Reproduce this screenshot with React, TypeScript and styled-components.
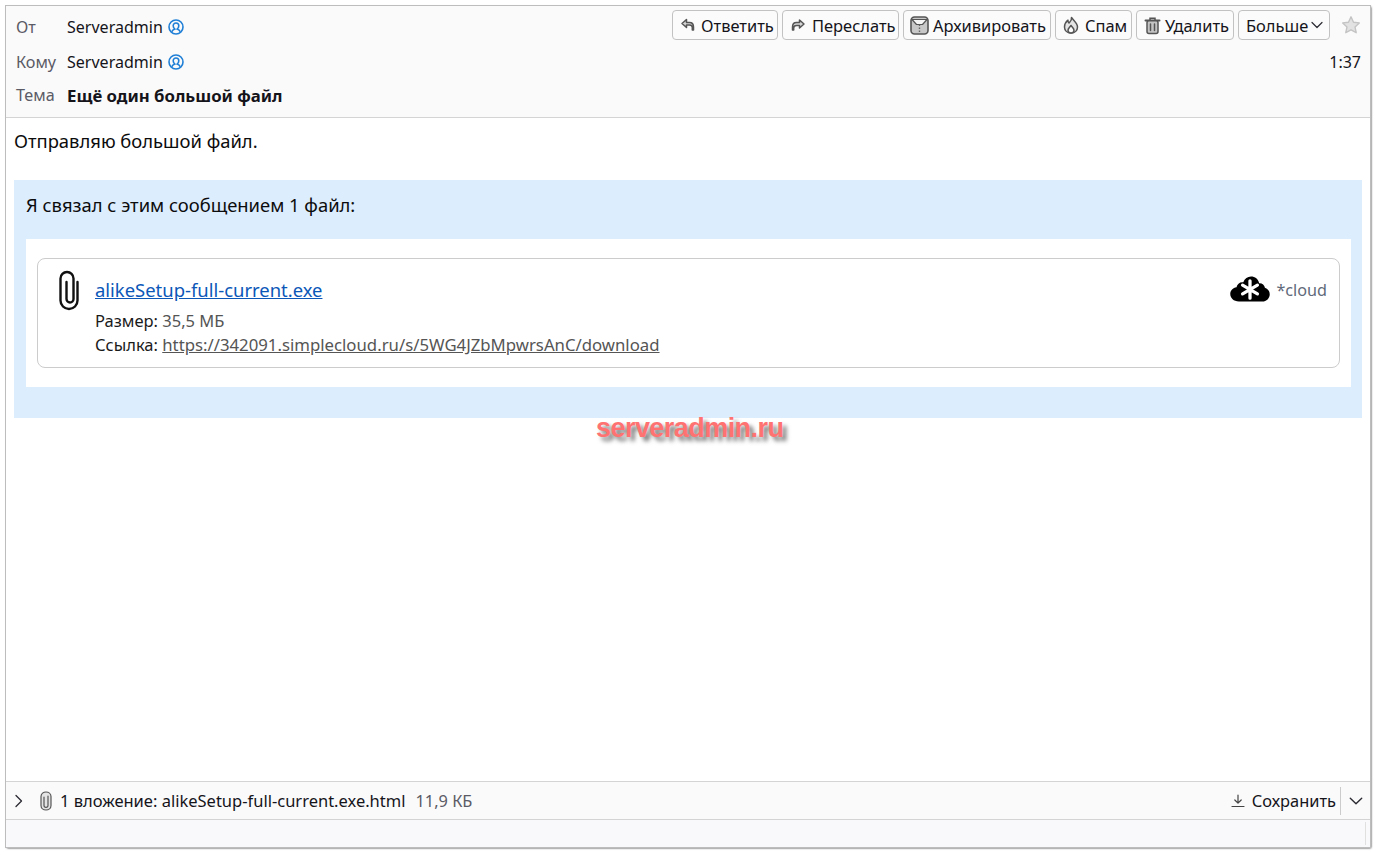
import React from "react";
import styled, { createGlobalStyle } from "styled-components";

const Global = createGlobalStyle`
  html, body { margin: 0; padding: 0; background: #fff; }
  body { font-family: "Noto Sans", "Open Sans", sans-serif; color: #15141a; }
  #root { height: 853px; overflow: hidden; }
`;
const Page = styled.div`
  height: 853px; box-sizing: border-box; padding: 6px 6px 5px 6px; background: #fff;
`;
const Win = styled.div`
  position: relative; height: 841px; display: flex; flex-direction: column; background: #fff;
  box-shadow: 0 0 0 1px #bdbdbd, 1px 1px 2px 0 rgba(0,0,0,.9);
`;
const Header = styled.header`
  height: 112px; flex: none; box-sizing: border-box; background: #fafafa; border-bottom: 1px solid #d4d4d4;
  padding: 4px 0 0 10px; display: flex; flex-direction: column;
`;
const Row = styled.div<{ $h: number }>`
  height: ${(p) => p.$h}px; display: flex; align-items: center; font-size: 16.05px;
`;
const Label = styled.span`
  width: 51px; flex: none; color: #5b5b66; font-size: 16.2px;
`;
const Name = styled.span``;
const Subject = styled.span`
  font-weight: 700; font-size: 16.75px;
`;
const Spacer = styled.div`flex: 1;`;
const Toolbar = styled.div`
  display: flex; align-items: center; align-self: flex-start; gap: 4px; padding-right: 9px;
`;
const Btn = styled.button<{ $w: number }>`
  width: ${(p) => p.$w}px; height: 30px; box-sizing: border-box; padding: 0 0 0 7px; margin: 0;
  display: flex; align-items: center; background: #fbfbfb; border: 1px solid #c2c2c2; border-radius: 4px;
  font: inherit; font-size: 16.45px; color: #15141a; white-space: nowrap;
  svg { flex: none; }
`;
const BtnText = styled.span<{ $ml: number }>`
  margin-left: ${(p) => p.$ml}px;
`;
const BtnCaret = styled.span`
  display: flex; margin-left: 2px;
`;
const StarBox = styled.span`
  display: flex; width: 20px; margin-left: 7px;
`;
const Time = styled.span`
  font-size: 16px; padding-right: 9px;
`;
const Body = styled.main`
  flex: 1; padding: 8px 8px 0 8px; font-size: 18.4px; color: #0c0c0d; position: relative;
`;
const Para = styled.p`
  margin: 0; height: 54px; line-height: 30px;
`;
const Blue = styled.section`
  height: 238px; box-sizing: border-box; background: #dcedfe; padding: 0 11px 0 12px;
`;
const BlueTitle = styled.div`
  height: 59px; line-height: 50px;
`;
const WhiteBox = styled.div`
  height: 148px; box-sizing: border-box; background: #fff; padding: 19px 11px 19px 11px;
`;
const Card = styled.div`
  height: 110px; box-sizing: border-box; border: 1px solid #ccc; border-radius: 8px; display: flex;
  padding: 11px 12px 0 20px;
`;
const ClipCol = styled.div`
  width: 37px; flex: none;
`;
const Info = styled.div`
  flex: 1; display: flex; flex-direction: column; margin-top: -2px;
`;
const FileLink = styled.a`
  color: #0b57b8; text-decoration: underline; font-size: 18.45px; line-height: 24px; height: 37px; padding-top: 10px; box-sizing: border-box;
`;
const Meta = styled.div`
  font-size: 16.5px; line-height: 24px; color: #1a1a1a; margin-top: 4px;
  & + & { margin-top: 0; }
`;
const MetaVal = styled.span`color: #555;`;
const MetaLink = styled.a`color: #555; text-decoration: underline; font-size: 16.75px;`;
const Provider = styled.div`
  display: flex; align-items: center; height: 40px; font-size: 16.2px; color: #5f6a7a; gap: 6px;
`;
const CloudMark = styled.span`
  display: flex; margin-top: -2px; margin-right: 0; margin-left: 1px;
`;
const Watermark = styled.div`
  position: absolute; left: 590px; top: 295px; font-family: "Liberation Sans", sans-serif; font-weight: 700; font-size: 27px;
  line-height: 30px; color: #ff7272; letter-spacing: -0.55px; text-shadow: 4px 4px 4px rgba(70,70,70,.75);
`;
const AttachBar = styled.div`
  height: 39px; flex: none; box-sizing: border-box; background: #fafafa; border-top: 1px solid #d4d4d4; border-bottom: 1px solid #d4d4d4;
  display: flex; align-items: center; padding-left: 6px; font-size: 16.5px;
`;
const Twisty = styled.span`display: flex; width: 24px;`;
const ClipSm = styled.span`display: flex; width: 14px; margin-left: 3px; margin-right: 7px;`;
const Size = styled.span`color: #5b5b66; margin-left: 10px; font-size: 16.35px;`;
const AttachName = styled.span``;
const Save = styled.div`
  display: flex; align-items: center; gap: 7px; padding-right: 4px; font-size: 16.4px;
`;
const SaveMenu = styled.div`
  display: flex; align-items: center; justify-content: center; width: 29px; height: 28px; border-left: 1px solid #ccc;
`;
const Status = styled.footer`
  height: 27px; flex: none; background: #f9f9fb; display: flex; justify-content: flex-end;
`;
const Grip = styled.div`
  width: 4px; border-left: 1px solid #e0e0e0; margin: 2px 0;
`;

const ic = { fill: "#d4d4d4", stroke: "#555", strokeWidth: 1.5, strokeLinecap: "round" as const, strokeLinejoin: "round" as const };

const Contact = () => (
  <svg width="16" height="16" viewBox="0 0 16 16" style={{ marginLeft: 5 }} fill="none" stroke="#1f7fd6" strokeWidth="1.6">
    <circle cx="8" cy="8" r="7" />
    <path d="M3.800 12.800c.3-1.600 1.200-2.100 3-2.800-1-.8-1.600-1.800-1.600-3.200C5.200 5 6.400 4 8 4s2.800 1 2.800 2.800c0 1.400-.6 2.400-1.600 3.200 1.800.7 2.700 1.200 3 2.800" />
  </svg>
);
const Reply = () => (
  <svg width="16" height="16" viewBox="0 0 16 16" {...ic}><path d="M6.500 2.500 2 6.500l4.500 4V8h3c1.800 0 2.800 1 2.800 2.600V13h1.200v-3c0-3-1.800-4.500-4-4.500H6.500z" /></svg>
);
const Forward = () => (
  <svg width="16" height="16" viewBox="0 0 16 16" {...ic}><path d="M9.500 3 14 7l-4.500 4V8.500h-3C4.700 8.500 3.700 9.500 3.700 11v2H2.500v-3c0-3 1.800-4.500 4-4.500h3z" /></svg>
);
const Archive = () => (
  <svg width="19" height="19" viewBox="0 0 19 19" style={{ marginLeft: -1 }}>
    <rect x="1" y="1" width="17" height="17" rx="3.500" fill="#c8c8c8" stroke="#555" strokeWidth="1.600" />
    <path d="M2 3.500h15L12.500 8.500h-6z" fill="#f6f6f6" stroke="#555" strokeWidth="1.200" strokeLinejoin="round" />
    <path d="M9.500 8.500v9" stroke="#666" strokeWidth="1.400" strokeDasharray="1.500 1.500" />
  </svg>
);
const Flame = () => (
  <svg width="16" height="19" viewBox="0 0 16 19" {...ic} fill="#e4e4e4">
    <path d="M8.500 1.500c.5 3-1 4-2.500 5.500C5 5.800 4.800 5 5 4.200 2.800 6 1.500 8.300 1.500 11c0 3.500 2.500 6 6.500 6s6.500-2.500 6.500-6c0-4-3.500-6-6-9.500z" />
    <path d="M8 17c-1.800 0-3-1.200-3-2.800 0-1.700 1.700-2.700 3-4.700 1.300 2 3 3 3 4.700 0 1.600-1.200 2.800-3 2.800z" fill="#fbfbfb" />
  </svg>
);
const Trash = () => (
  <svg width="17" height="19" viewBox="0 0 17 19" fill="none" stroke="#555" strokeWidth="1.500" strokeLinecap="round">
    <path d="M1.500 4.500h14" strokeWidth="2" />
    <path d="M6 4V2.200h5V4" />
    <rect x="3" y="4.800" width="11" height="12.700" rx="2" fill="#c4c4c4" />
    <path d="M6.500 8v6.500M10.500 8v6.500" />
  </svg>
);
const Chevron = ({ size = 14 }: { size?: number }) => (
  <svg width={size} height={size} viewBox="0 0 14 14" fill="none" stroke="#2b2a33" strokeWidth="1.200" strokeLinecap="round" strokeLinejoin="round"><path d="m2 4.500 5 5 5-5" /></svg>
);
const ChevronRight = () => (
  <svg width="14" height="14" viewBox="0 0 14 14" fill="none" stroke="#2b2a33" strokeWidth="1.300" strokeLinecap="round" strokeLinejoin="round"><path d="m4 1.500 5.500 5.500L4 12.500" /></svg>
);
const Star = () => (
  <svg width="20" height="20" viewBox="0 0 20 20"><path d="m10 1.800 2.500 5.400 5.800.7-4.300 4 1.200 5.800-5.200-2.900-5.200 2.900L6 11.900l-4.300-4 5.800-.7z" fill="#e2e2e2" stroke="#c4c4c4" strokeWidth="1.400" strokeLinejoin="round" /></svg>
);
const BigClip = () => (
  <svg width="22" height="42" viewBox="0 0 22 42" fill="none" stroke="#111" strokeWidth="2.400" strokeLinecap="round">
    <path d="M19.500 12V30.500a8.500 8.500 0 0 1-17 0V8.500a6.500 6.500 0 0 1 13 0V29a3.500 3.500 0 0 1-7 0V12" />
  </svg>
);
const Cloud = () => (
  <svg width="40" height="26" viewBox="0 0 41 27">
    <path d="M9 26.500C3.500 26.500 0 23 0 18.800c0-3.800 2.800-6.800 6.500-7.200C7.200 8.200 10 6 13.500 6.500 15 2.800 18 .5 21.500.5c4.200 0 7.700 2.800 8.500 7 3-.3 5.500 1.800 6 4.800 3 1 5 3.600 5 6.600 0 4.200-3.300 7.600-7.800 7.600z" fill="#000" />
    <path d="M20.500 5v18M12.800 9.500l15.400 9M28.200 9.500l-15.400 9" stroke="#fff" strokeWidth="3.400" strokeLinecap="round" />
  </svg>
);
const SmallClip = () => (
  <svg width="14" height="20" viewBox="0 0 14 20" fill="#e4e4e4" stroke="#555" strokeWidth="1.200" strokeLinecap="round">
    <path d="M2 5.500c0-6 10-6 10 0v9c0 6-10 6-10 0z" />
    <path d="M5 6v8.500c0 2.500 4 2.500 4 0V5" fill="none" />
  </svg>
);
const SaveIcon = () => (
  <svg width="14" height="14" viewBox="0 0 14 14" fill="none" stroke="#444" strokeWidth="1.200" strokeLinecap="round" strokeLinejoin="round">
    <path d="M7 1v8M3.800 6 7 9.200 10.200 6M1 12.500h12" />
  </svg>
);

export default function App() {
  return (
    <>
      <Global />
      <Page>
        <Win>
          <Header>
            <Row $h={34}>
              <Label>От</Label>
              <Name>Serveradmin</Name>
              <Contact />
              <Spacer />
              <Toolbar>
                <Btn $w={106}><Reply /><BtnText $ml={5}>Ответить</BtnText></Btn>
                <Btn $w={117}><Forward /><BtnText $ml={6}>Переслать</BtnText></Btn>
                <Btn $w={148}><Archive /><BtnText $ml={4}>Архивировать</BtnText></Btn>
                <Btn $w={77}><Flame /><BtnText $ml={6}>Спам</BtnText></Btn>
                <Btn $w={98}><Trash /><BtnText $ml={4}>Удалить</BtnText></Btn>
                <Btn $w={92}>Больше<BtnCaret><Chevron /></BtnCaret></Btn>
                <StarBox><Star /></StarBox>
              </Toolbar>
            </Row>
            <Row $h={36}>
              <Label>Кому</Label>
              <Name>Serveradmin</Name>
              <Contact />
              <Spacer />
              <Time>1:37</Time>
            </Row>
            <Row $h={30}>
              <Label>Тема</Label>
              <Subject>Ещё один большой файл</Subject>
            </Row>
          </Header>
          <Body>
            <Para>Отправляю большой файл.</Para>
            <Blue>
              <BlueTitle>Я связал с этим сообщением 1 файл:</BlueTitle>
              <WhiteBox>
                <Card>
                  <ClipCol><BigClip /></ClipCol>
                  <Info>
                    <FileLink>alikeSetup-full-current.exe</FileLink>
                    <Meta>Размер: <MetaVal>35,5 МБ</MetaVal></Meta>
                    <Meta>Ссылка: <MetaLink>https://342091.simplecloud.ru/s/5WG4JZbMpwrsAnC/download</MetaLink></Meta>
                  </Info>
                  <Provider><CloudMark><Cloud /></CloudMark>*cloud</Provider>
                </Card>
              </WhiteBox>
            </Blue>
            <Watermark>serveradmin.ru</Watermark>
          </Body>
          <AttachBar>
            <Twisty><ChevronRight /></Twisty>
            <ClipSm><SmallClip /></ClipSm>
            <AttachName>1 вложение: alikeSetup-full-current.exe.html</AttachName>
            <Size>11,9 КБ</Size>
            <Spacer />
            <Save><SaveIcon />Сохранить</Save>
            <SaveMenu><Chevron size={16} /></SaveMenu>
          </AttachBar>
          <Status><Grip /></Status>
        </Win>
      </Page>
    </>
  );
}
